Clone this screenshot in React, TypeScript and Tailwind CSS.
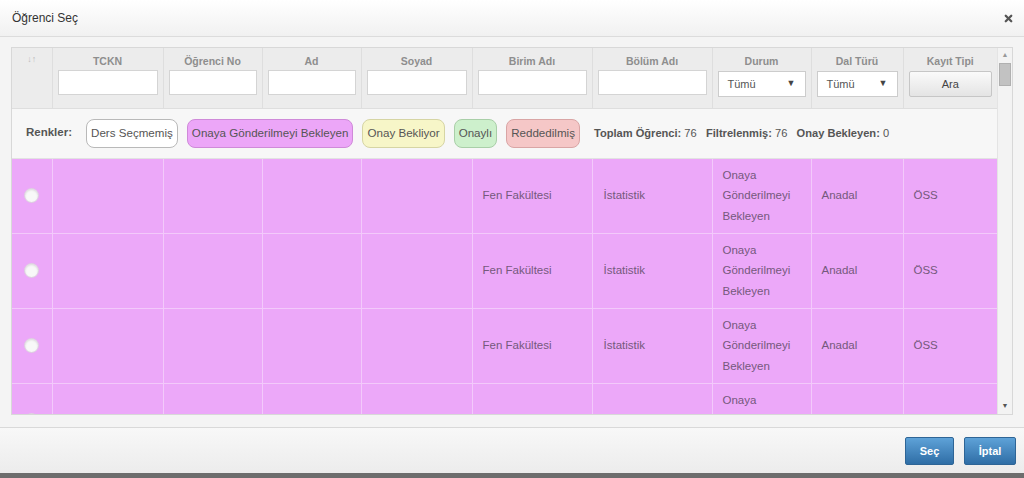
import { X } from 'lucide-react';

// sütun genişlikleri (px)
const COLS = [40, 111, 99, 99, 111, 120, 120, 99, 92, 94];

const HEADERS = ['TCKN', 'Öğrenci No', 'Ad', 'Soyad', 'Birim Adı', 'Bölüm Adı'];

const LEGEND = [
  { text: 'Ders Seçmemiş', className: 'bg-white border-[#b9b9b9]' },
  { text: 'Onaya Gönderilmeyi Bekleyen', className: 'bg-[#eca6f8] border-[#cf8ad9]' },
  { text: 'Onay Bekliyor', className: 'bg-[#f7f6c8] border-[#d6d5a4]' },
  { text: 'Onaylı', className: 'bg-[#cdf0cc] border-[#a9cfa8]' },
  { text: 'Reddedilmiş', className: 'bg-[#f5c7c7] border-[#d9a5a5]' },
];

const rows = [1, 2, 3, 4];

const SelectBox = () => (
  <div className="h-[26px] bg-white border border-[#ccc] flex items-center justify-between px-[9px] text-[11px] font-normal text-[#555]">
    <span>Tümü</span>
    <span className="text-[9px] text-[#444]">▼</span>
  </div>
);

const App = () => {
  return (
    <div className="w-[1024px] h-[478px] flex flex-col bg-[#f4f4f4] font-['Liberation_Sans',Arial,sans-serif] overflow-hidden">
      {/* başlık */}
      <div className="h-[37px] flex-shrink-0 flex items-center justify-between pl-[12px] pr-[10px] border-b border-[#dcdcdc] bg-gradient-to-b from-white to-[#f1f1f1]">
        <span className="text-[12px] text-[#333]">Öğrenci Seç</span>
        <X className="w-[11px] h-[11px] text-[#555]" strokeWidth={5} />
      </div>

      {/* içerik */}
      <div className="flex-1 px-[11px] pt-[10px] pb-[12px] flex flex-col min-h-0">
        <div className="flex-1 flex border border-[#d8d8d8] bg-white min-h-0">
          <div className="w-[985px] flex-shrink-0 overflow-hidden">
            <table className="table-fixed border-collapse w-[985px]">
              <colgroup>
                {COLS.map((w, i) => (
                  <col key={i} style={{ width: w }} />
                ))}
              </colgroup>
              <thead>
                <tr className="h-[60px] bg-[#ececec]">
                  <th className="border-r border-b border-[#dedede] align-top pt-[5px] text-[9px] text-[#bbb] font-normal">↓↑</th>
                  {HEADERS.map((h) => (
                    <th key={h} className="border-r border-b border-[#dedede] align-top pt-[6px] px-[5px]">
                      <div className="text-[10.5px] font-bold text-[#8e8e8e] leading-[14px]">{h}</div>
                      <div className="mt-[2px] h-[25px] bg-white border border-[#d4d4d4]" />
                    </th>
                  ))}
                  <th className="border-r border-b border-[#dedede] align-top pt-[6px] px-[5px]">
                    <div className="text-[10.5px] font-bold text-[#8e8e8e] leading-[14px]">Durum</div>
                    <div className="mt-[3px]"><SelectBox /></div>
                  </th>
                  <th className="border-r border-b border-[#dedede] align-top pt-[6px] px-[5px]">
                    <div className="text-[10.5px] font-bold text-[#8e8e8e] leading-[14px]">Dal Türü</div>
                    <div className="mt-[3px]"><SelectBox /></div>
                  </th>
                  <th className="border-b border-[#dedede] align-top pt-[6px] px-[5px]">
                    <div className="text-[10.5px] font-bold text-[#8e8e8e] leading-[14px]">Kayıt Tipi</div>
                    <div className="mt-[3px] h-[26px] border border-[#c6c6c6] rounded-[2px] bg-gradient-to-b from-[#fafafa] to-[#e4e4e4] flex items-center justify-center text-[11px] font-normal text-[#444]">
                      Ara
                    </div>
                  </th>
                </tr>
                <tr className="h-[50px] bg-[#f7f7f7]">
                  <th colSpan={10} className="border-b border-[#e2e2e2] font-normal text-left">
                    <div className="flex items-center pl-[14px] text-[11.1px]">
                      <span className="font-bold text-[11.5px] text-[#555] mr-[14px]">Renkler:</span>
                      {LEGEND.map((l) => (
                        <span
                          key={l.text}
                          className={`h-[29px] flex items-center px-[4px] mr-[9px] rounded-[8px] border text-[11.6px] text-[#555] ${l.className}`}
                        >
                          {l.text}
                        </span>
                      ))}
                      <span className="ml-[5px] text-[#555]">
                        <b>Toplam Öğrenci:</b> 76&nbsp;&nbsp;&nbsp;<b>Filtrelenmiş:</b> 76&nbsp;&nbsp;&nbsp;<b>Onay Bekleyen:</b> 0
                      </span>
                    </div>
                  </th>
                </tr>
              </thead>
              <tbody className="text-[11.5px] text-[#75597c]">
                {rows.map((r) => (
                  <tr key={r} className="h-[75px] bg-[#eca8f9]">
                    <td className="border-r border-b border-[#f3c9fb] align-middle">
                      <span className="block mx-auto w-[15px] h-[15px] rounded-full bg-[#f8f8f8] border border-[#dccbe0] shadow-[inset_0_1px_2px_rgba(0,0,0,0.12)]" />
                    </td>
                    <td className="border-r border-b border-[#f3c9fb]" />
                    <td className="border-r border-b border-[#f3c9fb]" />
                    <td className="border-r border-b border-[#f3c9fb]" />
                    <td className="border-r border-b border-[#f3c9fb]" />
                    <td className="border-r border-b border-[#f3c9fb] px-[10px]">Fen Fakültesi</td>
                    <td className="border-r border-b border-[#f3c9fb] px-[11px]">İstatistik</td>
                    <td className="border-r border-b border-[#f3c9fb] px-[10px] leading-[20.5px]">
                      Onaya
                      <br />
                      Gönderilmeyi
                      <br />
                      Bekleyen
                    </td>
                    <td className="border-r border-b border-[#f3c9fb] px-[10px]">Anadal</td>
                    <td className="border-b border-[#f3c9fb] px-[10px]">ÖSS</td>
                  </tr>
                ))}
              </tbody>
            </table>
          </div>

          {/* kaydırma çubuğu */}
          <div className="flex-1 flex flex-col items-center bg-[#f3f3f3] border-l border-[#e4e4e4]">
            <div className="h-[15px] flex items-center text-[7px] text-[#999]">▲</div>
            <div className="w-[12px] h-[23px] bg-[#c2c2c2] border border-[#b0b0b0]" />
            <div className="flex-1" />
            <div className="h-[16px] flex items-center text-[7px] text-[#555]">▼</div>
          </div>
        </div>
      </div>

      {/* alt çubuk */}
      <div className="h-[46px] flex-shrink-0 border-t border-[#d9d9d9] bg-gradient-to-b from-[#f8f8f8] to-[#ececec] flex items-start justify-end gap-[10px] pr-[8px] pt-[9px]">
        <button className="w-[49px] h-[28px] rounded-[2px] border border-[#2e6596] bg-gradient-to-b from-[#5ea2d8] to-[#2f6ea6] text-white text-[11px] font-bold">
          Seç
        </button>
        <button className="w-[52px] h-[28px] rounded-[2px] border border-[#2e6596] bg-gradient-to-b from-[#5ea2d8] to-[#2f6ea6] text-white text-[11px] font-bold">
          İptal
        </button>
      </div>
      <div className="h-[5px] flex-shrink-0 bg-[#6d6d6d]" />
    </div>
  );
};

export default App;
